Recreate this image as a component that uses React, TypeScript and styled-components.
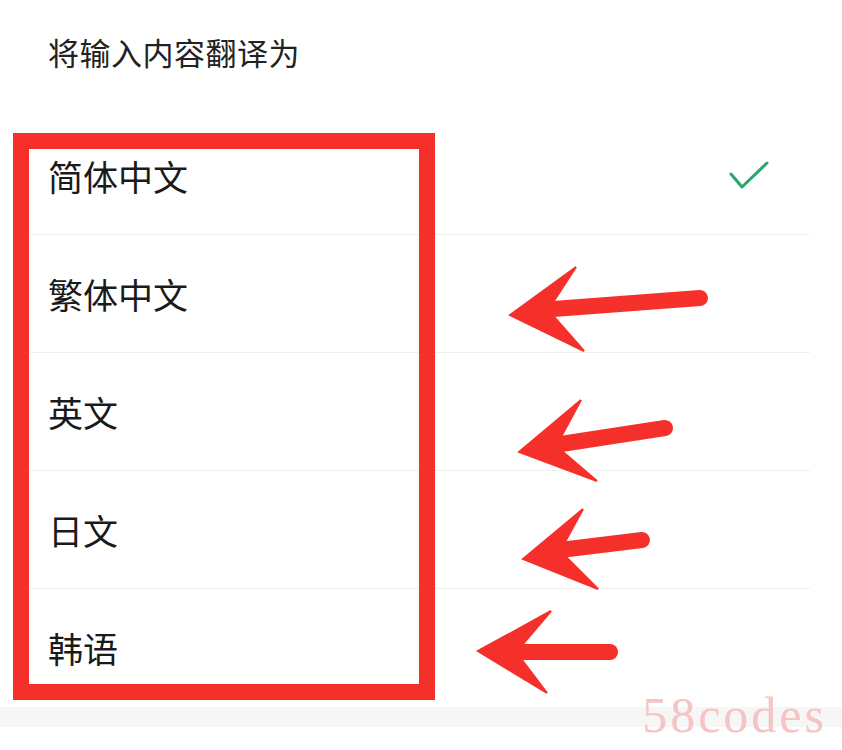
import React from 'react';
import styled, { createGlobalStyle } from 'styled-components';

const GlobalStyle = createGlobalStyle`
    html, body {
        margin: 0;
        padding: 0;
        background: #ffffff;
    }
    body {
        font-family: 'Noto Sans CJK SC', 'Noto Sans', sans-serif;
        color: #1c1c1c;
    }
`;

const Page = styled.div`
    position: relative;
    width: 842px;
    height: 750px;
    overflow: hidden;
    background: #ffffff;
`;

const Header = styled.div`
    height: 117px;
    padding-left: 48px;
    box-sizing: border-box;
    padding-top: 30px;
`;

const Title = styled.div`
    font-size: 31px;
    line-height: 44px;
    color: #222222;
    letter-spacing: 0.5px;
`;

const List = styled.div`
    display: flex;
    flex-direction: column;
    padding: 0 32px 0 30px;
`;

const Row = styled.div<{ $last?: boolean }>`
    display: flex;
    align-items: center;
    justify-content: space-between;
    height: 118px;
    box-sizing: border-box;
    border-bottom: ${(p) => (p.$last ? 'none' : '1px solid #f0f0f0')};
    padding: 0 41px 0 18px;
`;

const Label = styled.span`
    font-size: 35px;
    line-height: 40px;
    color: #1a1a1a;
`;

const GapBar = styled.div`
    height: 20px;
    background: #f6f6f6;
`;

// annotation layer drawn over the screenshot
const Highlight = styled.div`
    position: absolute;
    left: 13px;
    top: 133px;
    width: 422px;
    height: 567px;
    box-sizing: border-box;
    border: 16px solid #f5302a;
    pointer-events: none;
`;

const ArrowLayer = styled.svg`
    position: absolute;
    left: 0;
    top: 0;
    pointer-events: none;
`;

const Watermark = styled.div`
    position: absolute;
    right: 15px;
    bottom: 6px;
    font-family: 'Liberation Serif', 'Times New Roman', serif;
    font-size: 50px;
    letter-spacing: 3px;
    color: #f5c4c4;
`;

function Check() {
    return (
        <svg width="40" height="30" viewBox="0 0 40 30">
            <path d="M2 13 L13 26 L38 2" fill="none" stroke="#2aa66c" strokeWidth="3" strokeLinecap="round" strokeLinejoin="round" />
        </svg>
    );
}

type Pt = [number, number];
type ArrowDef = { tip: Pt; up: Pt; low: Pt; notch: Pt; end: Pt };

const arrows: ArrowDef[] = [
    { tip: [510, 315], up: [576, 267], low: [584, 351], notch: [548, 310], end: [700, 298] },
    { tip: [519, 452], up: [581, 400], low: [597, 481], notch: [556, 446], end: [665, 428] },
    { tip: [523, 559], up: [583, 509], low: [598, 589], notch: [560, 551], end: [642, 540] },
    { tip: [478, 651], up: [551, 611], low: [547, 693], notch: [516, 652], end: [610, 652] },
];

function Arrow({ a }: { a: ArrowDef }) {
    const pts = [a.tip, a.up, a.notch, a.low].map((p) => p.join(',')).join(' ');
    return (
        <g fill="#f5302a" stroke="#f5302a">
            <line x1={a.notch[0] - 8} y1={a.notch[1]} x2={a.end[0]} y2={a.end[1]} strokeWidth="16" strokeLinecap="round" />
            <polygon points={pts} strokeWidth="2" strokeLinejoin="miter" />
        </g>
    );
}

const languages = ['简体中文', '繁体中文', '英文', '日文', '韩语'];

export default function App() {
    return (
        <Page>
            <GlobalStyle />
            <Header>
                <Title>将输入内容翻译为</Title>
            </Header>
            <List>
                {languages.map((name, i) => (
                    <Row key={name} $last={i === languages.length - 1}>
                        <Label>{name}</Label>
                        {i === 0 && <Check />}
                    </Row>
                ))}
            </List>
            <GapBar />
            <Highlight />
            <ArrowLayer width="842" height="750" viewBox="0 0 842 750">
                {arrows.map((a, i) => (
                    <Arrow key={i} a={a} />
                ))}
            </ArrowLayer>
            <Watermark>58codes</Watermark>
        </Page>
    );
}
